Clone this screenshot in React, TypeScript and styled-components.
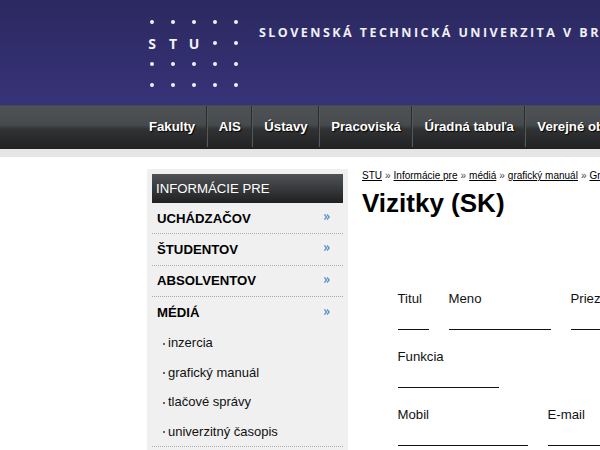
import React from 'react';
import styled, { createGlobalStyle } from 'styled-components';

const GlobalStyle = createGlobalStyle`
    html, body {
        margin: 0;
        padding: 0;
        background: #fff;
        overflow: hidden;
    }
    body {
        width: 600px;
        height: 450px;
        font-family: 'Liberation Sans', Arial, sans-serif;
        color: #000;
    }
`;

const Page = styled.div`
    width: 600px;
    height: 450px;
    overflow: hidden;
`;

const Header = styled.header`
    height: 105px;
    padding: 19px 0 0 148px;
    box-sizing: border-box;
    display: flex;
    align-items: flex-start;
    background: linear-gradient(#2b2960, #373378);
`;

const Logo = styled.div`
    display: grid;
    grid-template-columns: repeat(5, 21px);
    grid-auto-rows: 21px;
    width: 105px;
    flex: none;
`;

const LogoCell = styled.div`
    width: 8px;
    height: 6px;
    display: flex;
    justify-content: center;
    align-items: center;
    color: #f2f2f8;
    font-family: 'Open Sans', sans-serif;
    font-size: 14px;
    font-weight: 700;
`;

const Dot = styled.span`
    width: 4px;
    height: 4px;
    border-radius: 50%;
    background: #f0f0f6;
`;

const SchoolName = styled.div`
    margin: 6px 0 0 6px;
    white-space: nowrap;
    color: #f0f0f6;
    font-family: 'Open Sans', sans-serif;
    font-size: 12.5px;
    line-height: 16px;
    font-weight: 700;
    letter-spacing: 2.45px;
`;

const Nav = styled.nav`
    height: 44px;
    padding-left: 137.8px;
    display: flex;
    white-space: nowrap;
    background: linear-gradient(#4f5355 0, #474a4c 44%, #303233 54%, #202122 100%);
    border-top: 1px solid #45484c;
    box-sizing: border-box;
`;

const NavItem = styled.a`
    padding: 0 10.4px 0 11.2px;
    margin-bottom: 2px;
    margin-right: 1px;
    display: flex;
    align-items: center;
    color: #fff;
    font-size: 13.2px;
    font-weight: 700;
    text-shadow: 1px 1px 1px #000;
    border-right: 1px solid #2a2c2d;
    box-shadow: 1px 0 0 #55585a;

    &:last-child {
        border-right: none;
        box-shadow: none;
    }
`;

const NavGap = styled.div`
    height: 8px;
    background: #e5e5e5;
`;

const Main = styled.main`
    padding: 12px 0 0 147px;
    display: flex;
    align-items: flex-start;
`;

const Sidebar = styled.aside`
    width: 201px;
    height: 281px;
    flex: none;
    padding: 5px;
    box-sizing: border-box;
    background: #f0f0f0;
`;

const SideHead = styled.div`
    height: 29px;
    padding-left: 4px;
    display: flex;
    align-items: center;
    color: #fff;
    font-size: 13.2px;
    background: linear-gradient(#505356, #1f2021);
`;

const SideRow = styled.div`
    height: 31.3px;
    padding: 0 13px 0 5px;
    box-sizing: border-box;
    display: flex;
    align-items: center;
    justify-content: space-between;
    font-size: 13.2px;
    font-weight: 700;
    border-bottom: 1px dotted #aaa;

    &:last-of-type {
        border-bottom: none;
    }
`;

const Chevrons = styled.svg`
    width: 6px;
    height: 6px;
    margin-top: -2px;
    fill: none;
    stroke: #5b8fc4;
    stroke-width: 1.5;
`;

const SubList = styled.ul`
    list-style: none;
    margin: 0;
    padding: 0;
    border-bottom: 1px dotted #aaa;
`;

const SubItem = styled.li`
    height: 29.5px;
    padding-left: 11px;
    display: flex;
    align-items: center;
    gap: 3px;
    font-size: 13px;
    color: #111;

    &::before {
        content: '';
        width: 2px;
        height: 2px;
        margin-top: 2px;
        background: #666;
    }
`;

const Content = styled.section`
    margin-left: 14px;
    padding-top: 1px;
    white-space: nowrap;
`;

const Breadcrumb = styled.div`
    font-size: 10px;
    line-height: 12px;
`;

const Crumb = styled.a`
    text-decoration: underline;
`;

const Sep = styled.span`
    color: #444;
    margin: 0 3px;
`;

const Title = styled.h1`
    margin: 5px 0 0;
    font-size: 26px;
    line-height: 32px;
    font-weight: 700;
`;

const Form = styled.div`
    margin-top: 72px;
    padding-left: 36px;
    display: flex;
    flex-direction: column;
    gap: 19px;
`;

const FormRow = styled.div`
    display: flex;
`;

const Field = styled.div<{ $width: number; $gap: number }>`
    width: ${({ $width }) => $width}px;
    margin-right: ${({ $gap }) => $gap}px;
    flex: none;
`;

const Label = styled.div`
    margin-left: -0.5px;
    font-size: 13.2px;
    line-height: 16px;
    color: #111;
`;

const Line = styled.div`
    height: 1px;
    margin-top: 22px;
    background: #111;
`;

const navItems = ['Fakulty', 'AIS', 'Ústavy', 'Pracoviská', 'Úradná tabuľa', 'Verejné obstarávanie'];
const groups = ['UCHÁDZAČOV', 'ŠTUDENTOV', 'ABSOLVENTOV', 'MÉDIÁ'];
const subItems = ['inzercia', 'grafický manuál', 'tlačové správy', 'univerzitný časopis'];
const crumbs = ['STU', 'Informácie pre', 'médiá', 'grafický manuál', 'Grafické šablóny'];

const logoRows = [
    ['', '', '', '', ''],
    ['S', 'T', 'U', '', ''],
    ['', '', '', '', ''],
    ['', '', '', '', ''],
];

const App: React.FC = () => {
    return (
        <Page>
            <GlobalStyle />
            <Header>
                <Logo>
                    {logoRows.flat().map((letter, i) => (
                        <LogoCell key={i}>{letter || <Dot />}</LogoCell>
                    ))}
                </Logo>
                <SchoolName>SLOVENSKÁ TECHNICKÁ UNIVERZITA V BRATISLAVE</SchoolName>
            </Header>
            <Nav>
                {navItems.map((item) => (
                    <NavItem key={item}>{item}</NavItem>
                ))}
            </Nav>
            <NavGap />
            <Main>
                <Sidebar>
                    <SideHead>INFORMÁCIE PRE</SideHead>
                    {groups.map((group) => (
                        <SideRow key={group}>
                            {group}
                            <Chevrons viewBox="0 0 7 7">
                                <path d="M0.5 0.5L3 3.5L0.5 6.5M3.5 0.5L6 3.5L3.5 6.5" />
                            </Chevrons>
                        </SideRow>
                    ))}
                    <SubList>
                        {subItems.map((item) => (
                            <SubItem key={item}>{item}</SubItem>
                        ))}
                    </SubList>
                </Sidebar>
                <Content>
                    <Breadcrumb>
                        {crumbs.map((crumb, i) => (
                            <React.Fragment key={crumb}>
                                {i > 0 && <Sep>»</Sep>}
                                <Crumb>{crumb}</Crumb>
                            </React.Fragment>
                        ))}
                    </Breadcrumb>
                    <Title>Vizitky (SK)</Title>
                    <Form>
                        <FormRow>
                            <Field $width={31} $gap={20}>
                                <Label>Titul</Label>
                                <Line />
                            </Field>
                            <Field $width={102} $gap={20}>
                                <Label>Meno</Label>
                                <Line />
                            </Field>
                            <Field $width={102} $gap={0}>
                                <Label>Priezvisko</Label>
                                <Line />
                            </Field>
                        </FormRow>
                        <FormRow>
                            <Field $width={101} $gap={0}>
                                <Label>Funkcia</Label>
                                <Line />
                            </Field>
                        </FormRow>
                        <FormRow>
                            <Field $width={130} $gap={20}>
                                <Label>Mobil</Label>
                                <Line />
                            </Field>
                            <Field $width={130} $gap={0}>
                                <Label>E-mail</Label>
                                <Line />
                            </Field>
                        </FormRow>
                    </Form>
                </Content>
            </Main>
        </Page>
    );
};

export default App;
